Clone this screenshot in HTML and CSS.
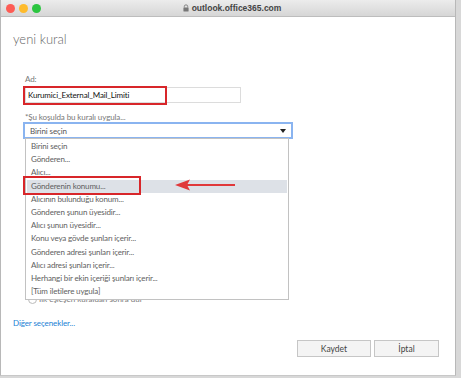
FILE: index.html
```html
<!DOCTYPE html>
<html lang="tr">
<head>
<meta charset="utf-8">
<link rel="stylesheet" href="styles.css">
</head>
<body>
<div class="window">
  <div class="titlebar">
    <div class="lights">
      <span class="light red"></span>
      <span class="light yellow"></span>
      <span class="light green"></span>
    </div>
    <div class="url">
      <svg class="lock" width="6" height="8" viewBox="0 0 7 9"><path d="M1.5 4V2.8a2 2 0 0 1 4 0V4" fill="none" stroke="#777" stroke-width="1"/><rect x="0.5" y="4" width="6" height="4.5" rx="0.6" fill="#777"/></svg>
      <span>outlook.office365.com</span>
    </div>
  </div>
  <div class="content">
    <h1 class="title">yeni kural</h1>
    <div class="form">
      <div class="label">Ad:</div>
      <div class="name-wrap">
        <div class="input">Kurumici_External_Mail_Limiti</div>
        <div class="mark mark-name"></div>
      </div>
      <div class="label label-cond">*Şu koşulda bu kuralı uygula...</div>
      <div class="select-wrap">
        <div class="select">
          <span>Birini seçin</span>
          <svg class="caret" width="6" height="4" viewBox="0 0 6 4"><path d="M0 0h6L3 4z" fill="#222"/></svg>
        </div>
        <ul class="list">
          <li>Birini seçin</li>
          <li>Gönderen...</li>
          <li>Alıcı...</li>
          <li class="hl">Gönderenin konumu...</li>
          <li>Alıcının bulunduğu konum...</li>
          <li>Gönderen şunun üyesidir...</li>
          <li>Alıcı şunun üyesidir...</li>
          <li>Konu veya gövde şunları içerir...</li>
          <li>Gönderen adresi şunları içerir...</li>
          <li>Alıcı adresi şunları içerir...</li>
          <li>Herhangi bir ekin içeriği şunları içerir...</li>
          <li>[Tüm iletilere uygula]</li>
        </ul>
        <div class="mark mark-item"></div>
        <svg class="arrow" width="62" height="14" viewBox="0 0 62 14"><path d="M12 7H60" stroke="#e0383a" stroke-width="2"/><path d="M0 7L15 1.5L12 7L15 12.5z" fill="#e0383a"/></svg>
      </div>
      <div class="radio-row">
        <span class="radio"></span>
        <span class="radio-text">İlk eşleşen kuraldan sonra dur</span>
      </div>
    </div>
    <a class="more" href="#">Diğer seçenekler...</a>
    <div class="actions">
      <button class="btn btn-save">Kaydet</button>
      <button class="btn btn-cancel">İptal</button>
    </div>
  </div>
</div>
</body>
</html>
```

FILE: styles.css
```css
html, body {
  margin: 0;
  padding: 0;
}
body {
  width: 461px;
  height: 378px;
  overflow: hidden;
  background: #d8d8d8;
  font-family: Lato, "Open Sans", sans-serif;
}
.window {
  width: 456px;
  height: 376px;
  background: #fff;
  border-left: 1px solid #b8b8b8;
  border-right: 1px solid #b8b8b8;
  border-bottom: 1px solid #c8c8c8;
  box-sizing: border-box;
}
.titlebar {
  height: 16px;
  background: linear-gradient(#ececec, #d6d6d6);
  border-bottom: 1px solid #bdbdbd;
  display: flex;
  align-items: center;
  position: relative;
}
.lights {
  display: flex;
  gap: 4px;
  padding-left: 5px;
}
.light {
  width: 9px;
  height: 9px;
  border-radius: 50%;
  display: block;
}
.red { background: #fd5c55; }
.yellow { background: #febb2c; }
.green { background: #2bc53f; }
.url {
  position: absolute;
  left: 0;
  right: 0;
  top: 0;
  bottom: 0;
  display: flex;
  align-items: center;
  justify-content: center;
  gap: 3px;
  font-family: "Liberation Sans", Arial, sans-serif;
  font-size: 8.5px;
  font-weight: bold;
  color: #444;
  padding-left: 8px;
}
.content {
  padding: 14px 0 0 12px;
}
.title {
  margin: 0;
  font-size: 13px;
  line-height: 16px;
  font-weight: 300;
  color: #666;
}
.form {
  padding: 26px 0 0 12px;
}
.label {
  font-size: 8px;
  line-height: 12px;
  letter-spacing: -0.1px;
  color: #777;
}
.name-wrap {
  position: relative;
  margin-top: 2px;
}
.input {
  width: 216px;
  height: 16px;
  border: 1px solid #dcdcdc;
  box-sizing: border-box;
  font-size: 8px;
  letter-spacing: -0.15px;
  line-height: 14px;
  padding-left: 2px;
  color: #111;
}
.mark {
  position: absolute;
  border: 2.5px solid #d8262a;
  box-sizing: border-box;
}
.mark-name {
  left: -2px;
  top: -1px;
  width: 144px;
  height: 19px;
}
.label-cond {
  margin-top: 8px;
}
.select-wrap {
  position: relative;
  margin-top: -1px;
  margin-left: -2px;
}
.select {
  width: 270px;
  height: 17px;
  box-sizing: border-box;
  border: 2px solid #8ab4f0;
  display: flex;
  align-items: center;
  justify-content: space-between;
  padding: 0 5px 0 5px;
  font-size: 8px;
  letter-spacing: -0.1px;
  color: #555;
}
.caret {
  display: block;
}
.list {
  position: absolute;
  left: 2px;
  top: 16px;
  width: 264px;
  margin: 0;
  padding: 1px 1px 1px 1px;
  list-style: none;
  background: #fff;
  border: 1px solid #c2c2c2;
  box-sizing: border-box;
  z-index: 2;
}
.list li {
  height: 13.2px;
  line-height: 13.2px;
  font-size: 8px;
  letter-spacing: -0.15px;
  color: #5e5e5e;
  padding-left: 4px;
  white-space: nowrap;
}
.list li.hl {
  background: #dde1e7;
}
.mark-item {
  left: 0;
  top: 54px;
  width: 118px;
  height: 19px;
  z-index: 3;
}
.arrow {
  position: absolute;
  left: 152px;
  top: 56px;
  z-index: 3;
}
.radio-row {
  display: flex;
  align-items: center;
  gap: 2px;
  margin-top: 155px;
  margin-left: 3px;
  font-size: 8px;
  line-height: 10px;
  color: #777;
}
.radio {
  width: 7px;
  height: 7px;
  border: 1px solid #bbb;
  border-radius: 50%;
  display: block;
}
.more {
  display: block;
  margin-top: 14px;
  font-size: 8px;
  letter-spacing: -0.1px;
  color: #1a7fd4;
  text-decoration: none;
}
.actions {
  display: flex;
  justify-content: flex-end;
  gap: 3px;
  margin-top: 12px;
  padding-right: 16px;
}
.btn {
  height: 17px;
  border: 1px solid #c6c6c6;
  background: #f4f4f4;
  font-family: Lato, "Open Sans", sans-serif;
  font-size: 8.5px;
  color: #444;
  padding: 0;
}
.btn-save { width: 74px; }
.btn-cancel { width: 65px; }
```
